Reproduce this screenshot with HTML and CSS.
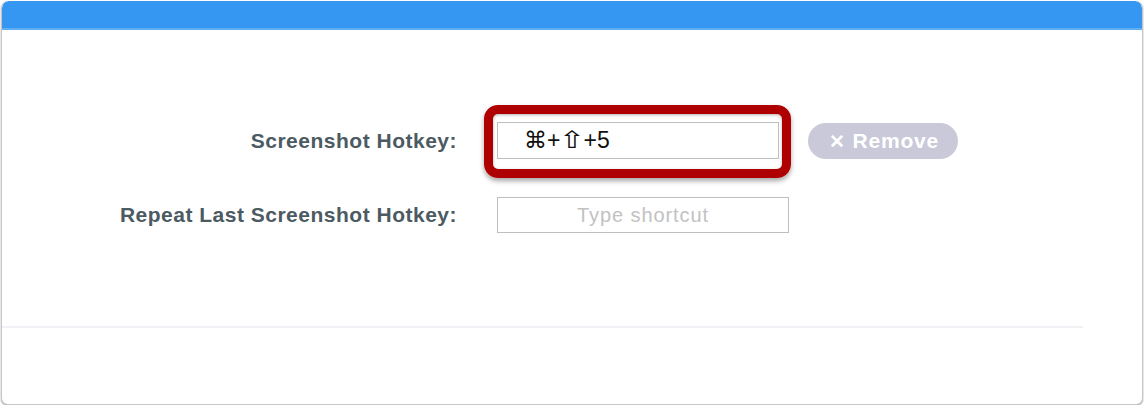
FILE: index.html
```html
<!DOCTYPE html>
<html lang="en">
<head>
    <meta charset="UTF-8">
    <meta name="viewport" content="width=device-width, initial-scale=1.0">
    <title>Hotkeys</title>
    <link rel="stylesheet" href="styles.css">
</head>
<body>
    <div class="window">
        <div class="titlebar"></div>

        <div class="content">
            <form class="hotkeys">
                <label class="hotkey-label">Screenshot Hotkey:</label>
                <div class="hotkey-field">
                    <div class="hotkey-input filled"><span class="key-sym">⌘</span>+<span class="key-shift">⇧</span>+5</div>
                    <div class="highlight"></div>
                </div>
                <div class="hotkey-action">
                    <button type="button" class="remove-btn"><span class="x">✕</span> Remove</button>
                </div>

                <label class="hotkey-label">Repeat Last Screenshot Hotkey:</label>
                <div class="hotkey-field">
                    <div class="hotkey-input empty">Type shortcut</div>
                </div>
                <div class="hotkey-action"></div>
            </form>
        </div>

        <div class="divider"></div>
    </div>
</body>
</html>
```

FILE: styles.css
```css
body {
    margin: 0;
    padding: 0;
    background-color: #ffffff;
    font-family: 'Liberation Sans', Arial, sans-serif;
}

.window {
    margin: 1px 1px 0 1px;
    height: 403px;
    border: 1px solid #c6c6c6;
    border-top: none;
    border-radius: 7px;
    box-shadow: 0 1px 2px rgba(0, 0, 0, 0.35);
    background-color: #fff;
    overflow: hidden;
    display: flex;
    flex-direction: column;
}

.titlebar {
    height: 27px;
    background-color: #3597f1;
    border-bottom: 2px solid #60aef5;
    border-radius: 7px 7px 0 0;
}

.content {
    padding-top: 92px;
    height: 204px;
}

.hotkeys {
    display: grid;
    grid-template-columns: 495px 292px auto;
    row-gap: 38px;
    align-items: center;
}

.hotkey-label {
    text-align: right;
    padding-right: 40px;
    font-weight: bold;
    font-size: 21px;
    letter-spacing: 0.5px;
    color: #4c5a62;
}

.hotkey-field {
    position: relative;
}

.hotkey-input {
    box-sizing: border-box;
    height: 37px;
    border: 1.5px solid #bfbfbf;
    line-height: 34px;
}

.hotkey-input.filled {
    width: 282px;
    padding-left: 26px;
    color: #111;
    font-size: 23px;
}

.key-sym {
    font-family: 'DejaVu Sans', sans-serif;
    font-size: 23px;
}

.key-shift {
    display: inline-block;
    font-family: 'DejaVu Sans', sans-serif;
    font-size: 24px;
    line-height: 30px;
    margin: 0 1px 0 2px;
    transform: scaleX(1.3);
}

.hotkey-input.empty {
    height: 36px;
    text-align: center;
    color: #c2c2c2;
    font-size: 20px;
    letter-spacing: 0.9px;
}

/* red annotation box drawn over the first field */
.highlight {
    position: absolute;
    top: -17px;
    left: -13px;
    right: -2px;
    bottom: -19px;
    border: 9px solid #ae0000;
    border-radius: 14px;
    box-shadow: 0 3px 5px rgba(0, 0, 0, 0.35), inset 0 1px 3px rgba(0, 0, 0, 0.3);
}

.hotkey-action {
    padding-left: 19px;
}

.remove-btn {
    width: 150px;
    height: 36px;
    border: none;
    border-radius: 18px;
    background-color: #c9c9d9;
    color: #fff;
    font-family: 'Liberation Sans', Arial, sans-serif;
    font-weight: bold;
    font-size: 21px;
    letter-spacing: 0.8px;
    padding: 0 0 0 2px;
}

.remove-btn .x {
    font-size: 19px;
}

.divider {
    width: 1081px;
    height: 2px;
    background-color: #eff1f4;
}
```
